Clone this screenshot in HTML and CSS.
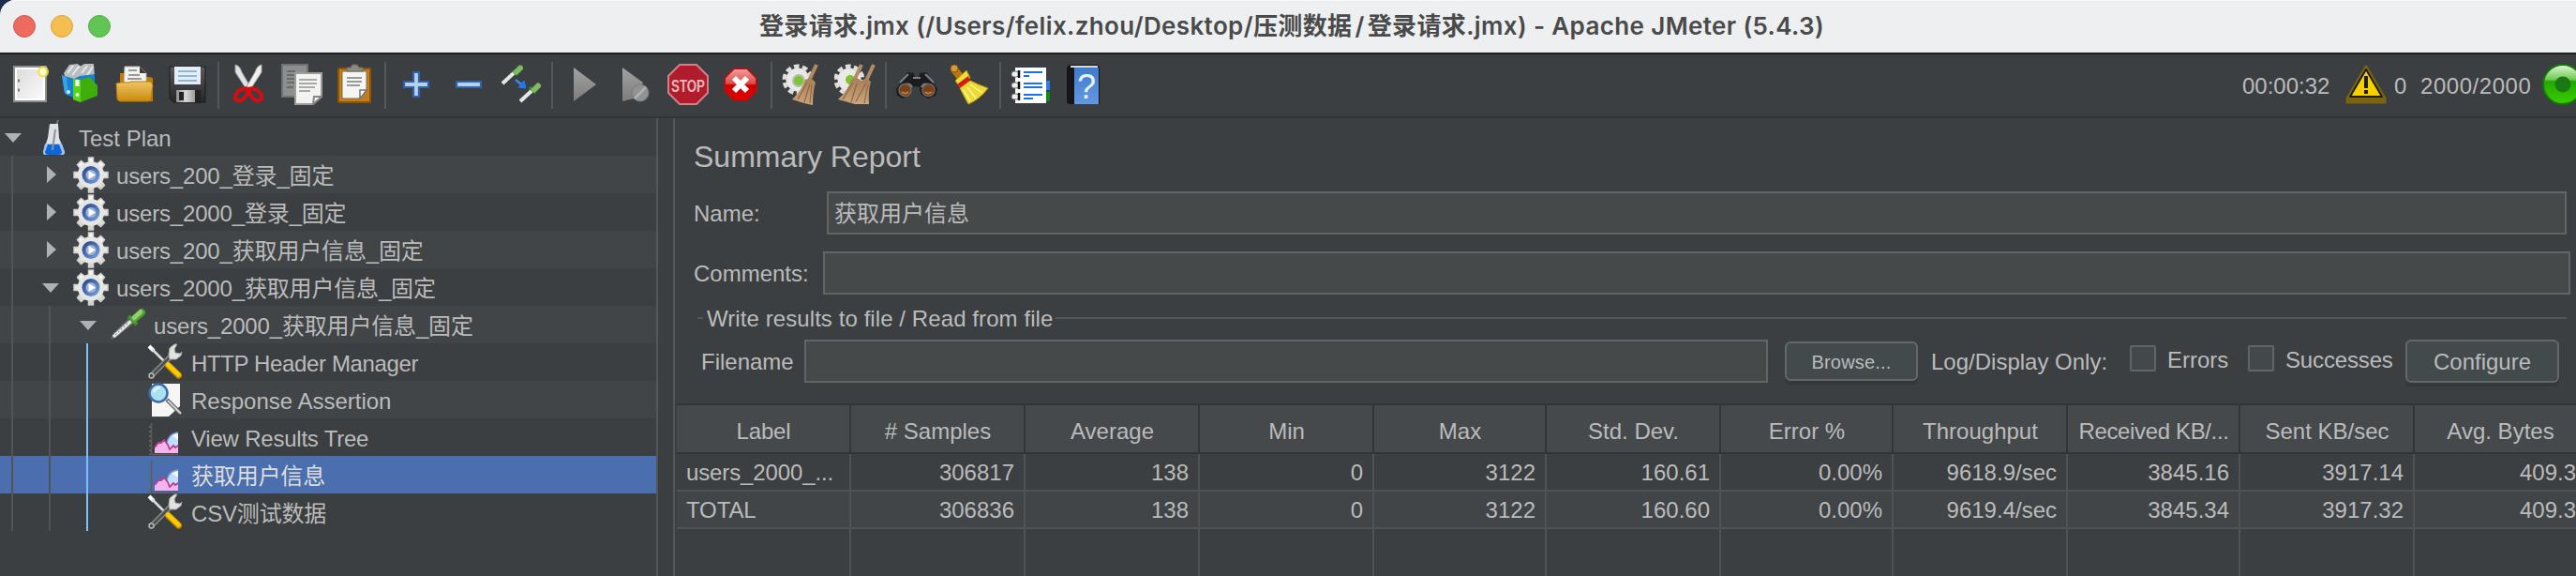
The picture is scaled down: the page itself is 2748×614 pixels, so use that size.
FILE: index.html
```html
<!DOCTYPE html>
<html lang="zh">
<head>
<meta charset="utf-8">
<title>Apache JMeter</title>
<link rel="stylesheet" href="styles.css">
</head>
<body>
<svg class="defs" width="0" height="0" aria-hidden="true">
  <defs>
    <linearGradient id="gray" x1="0" y1="0" x2="0" y2="1"><stop offset="0" stop-color="#a2a2a2"/><stop offset="1" stop-color="#7d7d7d"/></linearGradient>
    <linearGradient id="paper" x1="0" y1="0" x2="1" y2="1"><stop offset="0" stop-color="#dcdcdc"/><stop offset="1" stop-color="#fafafa"/></linearGradient>
    <linearGradient id="folder" x1="0" y1="0" x2="0" y2="1"><stop offset="0" stop-color="#f0c468"/><stop offset="1" stop-color="#c98a08"/></linearGradient>
    <linearGradient id="red" x1="0" y1="0" x2="0" y2="1"><stop offset="0" stop-color="#f2a0a0"/><stop offset=".48" stop-color="#e04848"/><stop offset=".52" stop-color="#cc0000"/><stop offset="1" stop-color="#e60000"/></linearGradient>
    <linearGradient id="floppy" x1="0" y1="0" x2="0" y2="1"><stop offset="0" stop-color="#5a5a5e"/><stop offset="1" stop-color="#26262a"/></linearGradient>
    <linearGradient id="metal" x1="0" y1="0" x2="1" y2="0"><stop offset="0" stop-color="#8a8a8a"/><stop offset=".5" stop-color="#d8d8d8"/><stop offset="1" stop-color="#9a9a9a"/></linearGradient>
    <linearGradient id="greenball" x1="0" y1="0" x2="0" y2="1"><stop offset="0" stop-color="#e4f7da"/><stop offset=".38" stop-color="#6cc84e"/><stop offset=".42" stop-color="#22a800"/><stop offset="1" stop-color="#3ccc00"/></linearGradient>
    <linearGradient id="book" x1="0" y1="0" x2="0" y2="1"><stop offset="0" stop-color="#3f7ccc"/><stop offset="1" stop-color="#6298e2"/></linearGradient>
    <linearGradient id="cog" x1="0" y1="0" x2="0" y2="1"><stop offset="0" stop-color="#fafafa"/><stop offset="1" stop-color="#d2d2d0"/></linearGradient>
    <linearGradient id="cogcore" x1="0" y1="0" x2="1" y2="1"><stop offset="0" stop-color="#1d3f86"/><stop offset="1" stop-color="#7fa6e2"/></linearGradient>
    <linearGradient id="straw" x1="0" y1="0" x2="0" y2="1"><stop offset="0" stop-color="#a67e58"/><stop offset="1" stop-color="#cca67a"/></linearGradient>
    <symbol id="gear" viewBox="0 0 40 40">
      <path d="M18.500 2h5v5l4 1.500 4-3 4 4-3 4 1.500 4h5v6h-5l-1.500 4 3 4-4 4-4-3-4 1.500v5h-5v-5l-4-1.500-4 3-4-4 3-4-1.500-4h-5v-6h5l1.500-4-3-4 4-4 4 3 4-1.500z" fill="url(#cog)" stroke="#d0d0cc" stroke-width="1.500"/>
      <circle cx="21" cy="20.500" r="14" fill="#e6e6e4"/>
      <circle cx="21" cy="20.500" r="9.500" fill="url(#cogcore)"/><circle cx="21" cy="20.500" r="5.500" fill="#9fb1d2"/><path d="M18.500 16l7.500 4.500-7.500 4.500z" fill="#fff"/>
    </symbol>
    <symbol id="tools" viewBox="0 0 40 40">
      <path d="M3 3l19 19" stroke="#4a4c4c" stroke-width="3.500"/><path d="M3 3l5 5" stroke="#fff" stroke-width="4"/><path d="M6 6l16 16" stroke="#dedede" stroke-width="2.500"/>
      <path d="M6 34L27 13" stroke="#8a8d8a" stroke-width="5.500" stroke-linecap="round"/><path d="M6 34L27 13" stroke="#4b4e4e" stroke-width="2.500"/>
      <circle cx="5.500" cy="34.500" r="2.500" fill="#444" stroke="#b5b5b5" stroke-width="1.500"/>
      <path d="M24 12l1-7 5-4h3l-3 5 1 4 5 1 2-2-1 4-5 4-7 0z" fill="#e2e2e0" stroke="#a6a6a6" stroke-width="1"/>
      <path d="M23.500 23.500L34.500 34" stroke="#c98b00" stroke-width="7" stroke-linecap="round"/><path d="M23 22.500L34.500 33.500" stroke="#fccb08" stroke-width="4.500" stroke-linecap="round"/>
    </symbol>
    <symbol id="chart" viewBox="0 0 40 40">
      <path d="M5.500 5v33M3 38.500h31" stroke="#5b5b5f" stroke-width="1.500" fill="none"/><path d="M4 8v28" stroke="#6b6b70" stroke-width="1.500" stroke-dasharray="2 3"/>
      <path d="M22 30c0-9 3-14 12-15v20h-9z" fill="#c4dcff"/><path d="M27 18l7-3v8z" fill="#f4f9ff"/><path d="M22 27c1-7 4-11 12-12" stroke="#79a0df" fill="none" stroke-width="1.500"/>
      <path d="M9 37v-6l4-5h3l3-3 4 5 2 5 4-4 2 2 3-2v8z" fill="#f5b4ee"/><path d="M9 31l4-5h3l3-3 4 5 2 5 4-4 2 2 3-2" fill="none" stroke="#b8408c" stroke-width="1.800"/>
    </symbol>
    <symbol id="dropper" viewBox="0 0 40 40">
      <path d="M2 36l3-7L22 13l5 5L10 32z" fill="#6d716f"/><path d="M5 33L24 16" stroke="#eee" stroke-width="3.500"/><path d="M7 31L22 17" stroke="#8f938f" stroke-width="1.200" stroke-dasharray="2 2"/>
      <path d="M21 11l9 9" stroke="#3f8f2c" stroke-width="4"/><path d="M27 14L35 7" stroke="#4f9e38" stroke-width="8" stroke-linecap="round"/><path d="M27 13L34 6.500" stroke="#8fd468" stroke-width="4.500" stroke-linecap="round"/>
    </symbol>
  </defs>
</svg>

<div class="window">
  <header class="titlebar">
    <div class="lights"><i class="light close"></i><i class="light minimize"></i><i class="light maximize"></i></div>
    <h1 class="title">登录请求.jmx (/Users/felix.zhou/Desktop/压测数据<span class="slash">/</span>登录请求.jmx) - Apache JMeter (5.4.3)</h1>
  </header>

  <nav class="toolbar">
    <div class="tools">
      <div class="group">
        <svg class="tool" viewBox="0 0 44 44"><rect x="5" y="3" width="34" height="37" fill="#fff" stroke="#8e908c" stroke-width="2"/><rect x="8" y="6" width="28" height="31" fill="url(#paper)"/><path d="M9 18h2M9 28h2" stroke="#777" stroke-width="3"/><circle cx="36" cy="8.500" r="6" fill="#f2e24e" opacity=".85"/><circle cx="36" cy="8.500" r="3.500" fill="#fffbd0"/></svg>
        <svg class="tool" viewBox="0 0 44 44"><path d="M2 10L8 1l9-1 2 3 5-3h10l1 16H4z" fill="#b9bdbf"/><path d="M6 10l6-8M11 12l8-10M21 10l6-8M26 14l7-11" stroke="#e8eaea" stroke-width="2"/><path d="M0 12l13 4 6-3 16-2v18L17 38 3 32z" fill="#1583cf"/><path d="M0 12l5 2 2 20-4-3z" fill="#35a3e6"/><path d="M12 16l8 1 9-3 9 9v11l-18 7-8-3z" fill="#3fae0c"/><path d="M12 16l8 1v24l-8-3z" fill="#55d41a"/><path d="M16.500 17v7" stroke="#fff" stroke-width="4"/><circle cx="7" cy="30" r="2" fill="#d9edf8"/><circle cx="16.500" cy="33" r="2" fill="#e8ffe0"/></svg>
        <svg class="tool" viewBox="0 0 44 44"><path d="M6 10h8l3 4h20l4 1v25H6z" fill="#c07c04"/><path d="M11 3h16l7 7v18H10z" fill="#f3f3f1" stroke="#b8b8b4"/><path d="M15 7h9M15 12h12M14 16h15" stroke="#9a9a98" stroke-width="2"/><path d="M27 3v7h7z" fill="#3e3e3e"/><path d="M2 21q5-2 13-1l3-1h20q2 0 3 4l-2 15q0 2-3 2H6q-2 0-3-3z" fill="url(#folder)" stroke="#b87a08"/></svg>
        <svg class="tool" viewBox="0 0 44 44"><path d="M3 3h38v38H7l-4-4z" fill="url(#floppy)" stroke="#1c1c1e"/><rect x="8" y="3" width="28" height="19" fill="#e4eef8"/><path d="M12 8h20M12 13h20M12 18h20" stroke="#94b4d0" stroke-width="2"/><rect x="10" y="28" width="26" height="14" fill="#222"/><rect x="10" y="28" width="20" height="13" fill="url(#metal)"/><rect x="13" y="30" width="5" height="9" fill="#222"/></svg>
      </div>
      <i class="sep"></i>
      <div class="group">
        <svg class="tool" viewBox="0 0 44 44"><path d="M7 1q5 1 7 8l10 17-4 3L7 9z" fill="#e2e2e2" stroke="#9a9a9a"/><path d="M35 1q-5 1-7 8L18 26l4 3L35 9z" fill="#f0f0ee" stroke="#a2a2a2"/><path d="M21 27q-4-2-9 1-6 4-5 9 3 4 8 1 4-3 6-11zM21 27q4-2 9 1 6 4 5 9-3 4-8 1-4-3-6-11z" fill="none" stroke="#d40d12" stroke-width="4"/></svg>
        <svg class="tool" viewBox="0 0 44 44"><path d="M1 1h27v34H1z" fill="#8d8f8f" stroke="#6f7272" stroke-width="2"/><path d="M6 8h9M6 12h9M6 16h9M6 20h9M6 25h7" stroke="#6a6c6c" stroke-width="1.800"/><path d="M15 10h28v25l-9 8H15z" fill="#f3f3f2" stroke="#9c9c9a" stroke-width="2"/><path d="M19 17h19M19 21h19M19 25h17M19 29h12" stroke="#a9aaa8" stroke-width="1.800"/><path d="M43 35h-8l-1 8z" fill="#fff" stroke="#858684" stroke-width="2"/></svg>
        <svg class="tool" viewBox="0 0 44 44"><rect x="5" y="5" width="34" height="36" rx="1" fill="#c27e1e" stroke="#8b5504" stroke-width="2"/><path d="M9 8h26v20l-8 9H9z" fill="#f5f5f3" stroke="#7b6a50"/><path d="M14 15h16M14 19h16M14 23h14" stroke="#9a9a98" stroke-width="2"/><path d="M35 28h-7v9z" fill="#fff" stroke="#777" stroke-width="1.500"/><path d="M14 8V4h4l2-3h5l2 3h4v4z" fill="#8d8c82" stroke="#6d6b5e"/></svg>
      </div>
      <i class="sep"></i>
      <div class="group">
        <svg class="tool" viewBox="0 0 44 44"><path d="M19 9h6v10h10v6H25v10h-6V25H9v-6h10z" fill="#b6cfea" stroke="#2f62ab" stroke-width="2.200"/></svg>
        <svg class="tool" viewBox="0 0 44 44"><path d="M9 19h26v6H9z" fill="#b6cfea" stroke="#2f62ab" stroke-width="2.200"/></svg>
        <svg class="tool" viewBox="0 0 44 44"><path d="M2 21L15 9" stroke="#e6e6e4" stroke-width="4"/><path d="M13 7l5 5" stroke="#3f8f2c" stroke-width="3"/><path d="M17 8.500l4-4" stroke="#7cbc60" stroke-width="6" stroke-linecap="round"/><path d="M21 40L34 28" stroke="#e6e6e4" stroke-width="4"/><path d="M31 25l6 6" stroke="#3f8f2c" stroke-width="3"/><path d="M36 27.500l4-4" stroke="#7cbc60" stroke-width="6" stroke-linecap="round"/><path d="M16 17l6 5" stroke="#3f86f0" stroke-width="2.500"/><path d="M25 18l2 8-8-1z" fill="#1e78f0" stroke="#1e78f0"/></svg>
      </div>
      <i class="sep"></i>
      <div class="group">
        <svg class="tool" viewBox="0 0 44 44"><path d="M12 4l24 18-24 18z" fill="url(#gray)"/></svg>
        <svg class="tool" viewBox="0 0 44 44"><path d="M8 4l22 16-10 17-12 3z" fill="url(#gray)"/><circle cx="27" cy="31" r="9" fill="#929292" stroke="#7b7b7b"/><path d="M21 37l12-12" stroke="#b2b2b2" stroke-width="2.500"/></svg>
        <svg class="tool" viewBox="0 0 44 44"><path d="M13 1h18l12 12v18L31 43H13L1 31V13z" fill="#b01c2c" stroke="#d28088" stroke-width="2"/><text class="stop-text" x="4" y="29.500" textLength="36" lengthAdjust="spacingAndGlyphs">STOP</text></svg>
        <svg class="tool" viewBox="0 0 44 44"><path d="M15 5h14l10 10v14L29 39H15L5 29V15z" fill="url(#red)" stroke="#a01818" stroke-width="2"/><path d="M15 15l14 14M29 15L15 29" stroke="#fff" stroke-width="6"/></svg>
      </div>
      <i class="sep"></i>
      <div class="group">
        <svg class="tool" viewBox="0 0 44 44"><circle cx="17" cy="17" r="12.500" fill="#e9e9e7"/><circle cx="17" cy="17" r="14" fill="none" stroke="#dededc" stroke-width="5" stroke-dasharray="5.500 3.300"/><circle cx="18" cy="18" r="6" fill="#79c62e" stroke="#b8bcb4" stroke-width="2"/><path d="M37 1l-8 17" stroke="#b48a62" stroke-width="4"/><path d="M25 17l6-2 5 5q-3 10-3 24l-9-2-13-4q10-9 14-21z" fill="url(#straw)"/><path d="M27 20l-10 18M30 21l-6 20M32 22l-2 20" stroke="#8e6847" stroke-width="1.200"/></svg>
        <svg class="tool" viewBox="0 0 44 44"><circle cx="16" cy="17" r="12.500" fill="#e9e9e7"/><circle cx="16" cy="17" r="14" fill="none" stroke="#dededc" stroke-width="5" stroke-dasharray="5.500 3.300"/><circle cx="17" cy="17" r="5" fill="#79c62e"/><path d="M29 1l-8 17M42 1l-8 17" stroke="#b48a62" stroke-width="4"/><path d="M18 17l6-2 5 3 5-3 5 4q-3 10-2 24l-15 0-18-5q10-9 14-21z" fill="url(#straw)"/><path d="M20 20L9 38M24 21l-6 20M34 20l-11 20M36 22l-4 20" stroke="#8e6847" stroke-width="1.200"/></svg>
      </div>
      <i class="sep"></i>
      <div class="group">
        <svg class="tool" viewBox="0 0 44 44"><path d="M0 27L12 9l7 1 1 5h4l1-5 7-1 12 18-2 7-8 3-8-5-1-7-5-1-4 1-1 7-8 5-6-3z" fill="#1c1c1e"/><path d="M4 20l9-9M40 20l-9-9M18 15h8M9 22q6-2 8 3M35 22q-6-2-8 3" stroke="#7d8082" stroke-width="2" fill="none"/><circle cx="9.500" cy="28" r="6.500" fill="#7a4014" stroke="#6b6b6b" stroke-width="1.500"/><circle cx="34.500" cy="28" r="6.500" fill="#7a4014" stroke="#6b6b6b" stroke-width="1.500"/><path d="M6 30q3 3 7 0M31 30q3 3 7 0" stroke="#c87a3c" stroke-width="2" fill="none"/></svg>
        <svg class="tool" viewBox="0 0 44 44"><path d="M6 6l8 10" stroke="#b8780e" stroke-width="8" stroke-linecap="round"/><circle cx="6" cy="5" r="4" fill="#d99a38" stroke="#8a5606"/><path d="M7 18L19 7l4 8-11 10z" fill="#f0dc3a" stroke="#b29208"/><path d="M9 22L21 13l2 6-10 7z" fill="#d81818"/><path d="M12 26l11-8q8 4 19 8-9 12-21 17-4-7-9-17z" fill="#ecd93a" stroke="#b89c10"/><path d="M16 28l7 12M20 25l9 12M23 22l13 9" stroke="#fdf48c" stroke-width="1.500"/></svg>
      </div>
      <i class="sep"></i>
      <div class="group">
        <svg class="tool" viewBox="0 0 44 44"><path d="M36 18h6v10h-6z" fill="#2f7ae6"/><path d="M36 30h6v10h-6z" fill="#0b8a12"/><rect x="5" y="4" width="33" height="38" fill="#fdfdfd"/><path d="M14 9h20M14 21h20M14 25h20M14 33h20" stroke="#1f6fe0" stroke-width="2"/><path d="M14 13h6M14 37h10" stroke="#1f6fe0" stroke-width="2"/><g fill="#eee" stroke="#777"><rect x="1" y="8" width="8" height="6" rx="3"/><rect x="1" y="20" width="8" height="6" rx="3"/><rect x="1" y="32" width="8" height="6" rx="3"/></g><path d="M9 7v8M9 19v8M9 31v8" stroke="#111" stroke-width="2.500"/></svg>
        <svg class="tool" viewBox="0 0 44 44"><path d="M4 4q1-3 5-3h28l2 3v39H7q-3 0-3-4z" fill="#161618"/><path d="M8 3h29" stroke="#d8dade" stroke-width="2"/><rect x="12" y="4" width="26" height="39" fill="url(#book)"/><text class="help-text" x="25" y="37" text-anchor="middle">?</text></svg>
      </div>
    </div>
    <div class="status">
      <span class="elapsed">00:00:32</span>
      <svg class="warn" viewBox="0 0 44 44"><path d="M22 3L2 37v4h40v-4z" fill="#7a6410" stroke="#7a6410" stroke-width="3" stroke-linejoin="round"/><path d="M22 6L5 35h34z" fill="#f8d000" stroke="#1d1d1b" stroke-width="2" stroke-linejoin="round"/><path d="M22 13v13M22 28v4" stroke="#1d1d1b" stroke-width="4"/></svg>
      <span class="errors-count">0</span>
      <span class="threads">2000/2000</span>
      <svg class="ball" viewBox="0 0 44 44"><circle cx="22" cy="22" r="21" fill="url(#greenball)" stroke="#0f7a08" stroke-width="2"/><circle cx="22" cy="22" r="8.500" fill="#197a14"/></svg>
    </div>
  </nav>

  <main class="main">
    <aside class="tree">
      <div class="row l0"><i class="arrow open"></i>
        <svg class="ico" viewBox="0 0 40 40"><path d="M26 2l-3 8" stroke="#777" stroke-width="2"/><path d="M17 6h9l1 15 6 15q0 3-3 3H13q-3 0-3-3l5-15z" fill="#dfe2e4"/><path d="M12 27h18l3 9q0 3-3 3H13q-3 0-3-3z" fill="#9dc2ee"/><path d="M15 28h12l3 8q0 3-4 3H16q-4 0-4-3z" fill="#0a68dc"/><path d="M23 12l-3 22" stroke="#8d9398" stroke-width="2"/></svg>
        <span class="label">Test Plan</span></div>
      <div class="row l1 alt"><i class="guide g0"></i><i class="arrow shut"></i><svg class="ico"><use href="#gear"/></svg><span class="label cjk">users_200_登录_固定</span></div>
      <div class="row l1"><i class="guide g0"></i><i class="arrow shut"></i><svg class="ico"><use href="#gear"/></svg><span class="label cjk">users_2000_登录_固定</span></div>
      <div class="row l1 alt"><i class="guide g0"></i><i class="arrow shut"></i><svg class="ico"><use href="#gear"/></svg><span class="label cjk">users_200_获取用户信息_固定</span></div>
      <div class="row l1"><i class="guide g0"></i><i class="arrow open"></i><svg class="ico"><use href="#gear"/></svg><span class="label cjk">users_2000_获取用户信息_固定</span></div>
      <div class="row l2 alt"><i class="guide g0"></i><i class="guide g1"></i><i class="arrow open"></i><svg class="ico"><use href="#dropper"/></svg><span class="label cjk">users_2000_获取用户信息_固定</span></div>
      <div class="row l3"><i class="guide g0"></i><i class="guide g1"></i><i class="guide g2"></i><svg class="ico"><use href="#tools"/></svg><span class="label header-manager">HTTP Header Manager</span></div>
      <div class="row l3 alt"><i class="guide g0"></i><i class="guide g1"></i><i class="guide g2"></i>
        <svg class="ico" viewBox="0 0 40 40"><path d="M6 3h30v24l-12 11H6z" fill="#f6f6f5"/><path d="M22 20l14 14" stroke="#666" stroke-width="4.500"/><path d="M23 21l14 14" stroke="#d4d4d4" stroke-width="2"/><circle cx="13" cy="13" r="9.500" fill="#a9e2f2" stroke="#3f69a8" stroke-width="2.500"/><path d="M8 12q2-5 7-5" stroke="#e4f9ff" stroke-width="2.500" fill="none"/></svg>
        <span class="label">Response Assertion</span></div>
      <div class="row l3"><i class="guide g0"></i><i class="guide g1"></i><i class="guide g2"></i><svg class="ico"><use href="#chart"/></svg><span class="label results-tree">View Results Tree</span></div>
      <div class="row l3 selected"><i class="guide g0"></i><i class="guide g1"></i><i class="guide g2"></i><svg class="ico"><use href="#chart"/></svg><span class="label cjk">获取用户信息</span></div>
      <div class="row l3"><i class="guide g0"></i><i class="guide g1"></i><i class="guide g2"></i><svg class="ico"><use href="#tools"/></svg><span class="label cjk">CSV测试数据</span></div>
    </aside>

    <section class="panel">
      <h2 class="heading">Summary Report</h2>
      <div class="field-row name-row"><label>Name:</label><div class="input">获取用户信息</div></div>
      <div class="field-row comments-row"><label>Comments:</label><div class="input"></div></div>
      <div class="legend"><i class="dash"></i><span>Write results to file / Read from file</span><i class="rule"></i></div>
      <div class="file-row">
        <label class="filename">Filename</label>
        <div class="input"></div>
        <div class="button browse">Browse...</div>
        <span class="log-label">Log/Display Only:</span>
        <i class="check"></i><span class="check-label errors">Errors</span>
        <i class="check"></i><span class="check-label successes">Successes</span>
        <div class="button configure">Configure</div>
      </div>
      <div class="table">
        <div class="tr head"><div>Label</div><div>#&nbsp;Samples</div><div>Average</div><div>Min</div><div>Max</div><div>Std. Dev.</div><div>Error %</div><div>Throughput</div><div class="tight">Received KB/...</div><div>Sent KB/sec</div><div>Avg. Bytes</div></div>
        <div class="tr"><div>users_2000_...</div><div>306817</div><div>138</div><div>0</div><div>3122</div><div>160.61</div><div>0.00%</div><div>9618.9/sec</div><div>3845.16</div><div>3917.14</div><div>409.3</div></div>
        <div class="tr alt"><div>TOTAL</div><div>306836</div><div>138</div><div>0</div><div>3122</div><div>160.60</div><div>0.00%</div><div>9619.4/sec</div><div>3845.34</div><div>3917.32</div><div>409.3</div></div>
        <div class="tr blank"><div></div><div></div><div></div><div></div><div></div><div></div><div></div><div></div><div></div><div></div><div></div></div>
      </div>
    </section>
  </main>
</div>
</body>
</html>
```
FILE: styles.css
```css
* { box-sizing: border-box; }
html, body { margin: 0; height: 100%; overflow: hidden; background: #1b2c4c; }
body {
  font: 24px/40px "Liberation Sans", "Noto Sans CJK SC", sans-serif;
  color: #bbbbbb;
  white-space: nowrap;
}
.defs { position: absolute; }
.window {
  display: flex; flex-direction: column;
  width: 2748px; height: 614px; overflow: hidden;
  background: #3c3f41; border-top-left-radius: 16px;
}

/* title bar */
.titlebar {
  display: grid; grid-template-columns: 810px 1fr;
  height: 58px; flex: none;
  background: #edeff1; border-top: 1px solid #f8f9fa; border-bottom: 2px solid #1d1e20;
}
.lights { display: flex; gap: 16px; padding: 15px 0 0 14px; }
.light { width: 24px; height: 24px; border-radius: 50%; border: 1px solid; }
.close { background: #ec6a5e; border-color: #d5564b; }
.minimize { background: #f4bf4f; border-color: #d9a23a; }
.maximize { background: #61c554; border-color: #4fab42; }
.title {
  margin: 0; font: 600 26px/54px Inter, "Noto Sans CJK SC", sans-serif;
  color: #4a4a4a; letter-spacing: 0.37px;
}
.slash { padding: 0 3px; }

/* toolbar */
.toolbar {
  display: flex; justify-content: space-between;
  height: 68px; flex: none; border-bottom: 2px solid #323537;
}
.tools { display: flex; padding: 8px 0 8px 4px; }
.group { display: flex; padding-right: 4px; }
.sep + .group { padding-left: 4px; }
.tool { width: 44px; height: 44px; margin: 2px 6px; }
.sep { width: 2px; height: 50px; background: #55565a; }
.stop-text { font: bold 19px "Liberation Sans", sans-serif; fill: #e8b4b8; }
.help-text { font: 36px "Liberation Sans", sans-serif; fill: #e8f2ff; }
.status { display: flex; line-height: 68px; width: 356px; }
.status > * { flex: none; }
.elapsed { width: 110px; }
.warn, .ball { width: 44px; height: 44px; margin-top: 10px; }
.errors-count { width: 36px; padding-left: 8px; }
.threads { width: 130px; letter-spacing: 0.55px; }

/* tree */
.main { display: grid; grid-template-columns: 718px 1fr; flex: 1; min-height: 0; }
.tree { width: 702px; border-right: 2px solid #555555; }
.row { display: flex; height: 40px; position: relative; }
.row.alt { background: #414547; }
.row.selected { background: #4b6eaf; }
.l0 { padding-left: 4px; }
.l1 { padding-left: 44px; }
.l2 { padding-left: 84px; }
.l3 { padding-left: 156px; }
.arrow { width: 32px; height: 40px; flex: none; }
.arrow::before { content: ""; display: block; background: #afb1b3; }
.open::before { width: 18px; height: 10px; margin: 16px 0 0 1px; clip-path: polygon(0 0, 100% 0, 50% 100%); }
.shut::before { width: 10px; height: 18px; margin: 11px 0 0 6px; clip-path: polygon(0 0, 100% 50%, 0 100%); }
.ico { width: 40px; height: 40px; margin-right: 8px; flex: none; }
.label { padding-top: 2px; line-height: 40px; }
.cjk { letter-spacing: -0.17px; }
.header-manager { letter-spacing: -0.36px; }
.results-tree { letter-spacing: -0.22px; }
.selected .label { color: #dddddd; }
.guide { position: absolute; top: 0; width: 2px; height: 40px; background: #515355; }
.g0 { left: 12px; }
.g1 { left: 52px; }
.g2 { left: 92px; background: #7dbeff; }

/* panel */
.panel { border-left: 2px solid #555555; overflow: hidden; display: flex; flex-direction: column; }
.heading { margin: 20px 0 0 20px; font-size: 32px; font-weight: normal; line-height: 40px; height: 58px; padding-top: 1px; }
.input {
  height: 46px; border: 2px solid #646464; background: #45494a;
  padding-left: 6px; line-height: 43px; flex: 1;
}
.field-row { display: flex; line-height: 47px; height: 46px; margin-left: 20px; }
.name-row { margin-right: 10px; margin-bottom: 18px; }
.name-row label { width: 142px; }
.comments-row { margin-right: 6px; }
.comments-row label { width: 138px; }
.legend { display: flex; align-items: center; height: 48px; margin: 0 10px 0 24px; }
.legend span { line-height: 48px; padding: 4px 0 0 4px; width: 376px; letter-spacing: 0.08px; }
.dash { width: 6px; height: 2px; background: #555555; margin-top: 2px; }
.rule { flex: 1; height: 2px; background: #555555; margin-top: 2px; }
.file-row { display: flex; height: 68px; line-height: 46px; padding-left: 28px; }
.file-row > * { flex: none; }
.filename { width: 110px; padding-top: 1px; }
.file-row .input { flex: none; width: 1028px; }
.button {
  border: 2px solid #666868; border-radius: 6px; background: #434a4c;
  text-align: center; box-shadow: 0 4px 0 #353839;
}
.browse { width: 142px; height: 42px; margin: 2px 14px 0 18px; font-size: 20px; line-height: 40px; letter-spacing: 0.2px; }
.log-label { width: 212px; padding-top: 1px; }
.check { width: 28px; height: 28px; margin-top: 6px; border: 2px solid #626566; border-radius: 2px; background: #43494a; }
.check-label { line-height: 44px; padding-left: 12px; }
.errors { width: 98px; }
.successes { width: 140px; letter-spacing: -0.15px; }
.configure { width: 164px; height: 46px; line-height: 44px; }

/* results table */
.table { width: 2044px; margin-left: 2px; border-top: 2px solid #323537; flex: 1; display: flex; flex-direction: column; }
.tr { display: grid; grid-template-columns: 186px 186px 186px 186px 184px 186px 184px 186px 184px 186px 184px; }
.tr > div { height: 40px; line-height: 40px; text-align: right; padding-right: 10px; border-right: 2px solid #505254; border-bottom: 2px solid #505254; }
.tr.alt { background: #414547; }
.tr > div:first-child { text-align: left; padding-left: 10px; padding-right: 0; letter-spacing: -0.12px; }
.head { background: #45494b; }
.tr.head > div { height: 52px; line-height: 56px; text-align: center; padding: 0 0 0 1px; border-color: #323537; }
.tr.head > .tight { letter-spacing: -0.35px; }
.blank { flex: 1; }
.tr.blank > div { height: 100%; border-bottom: 0; }
```
